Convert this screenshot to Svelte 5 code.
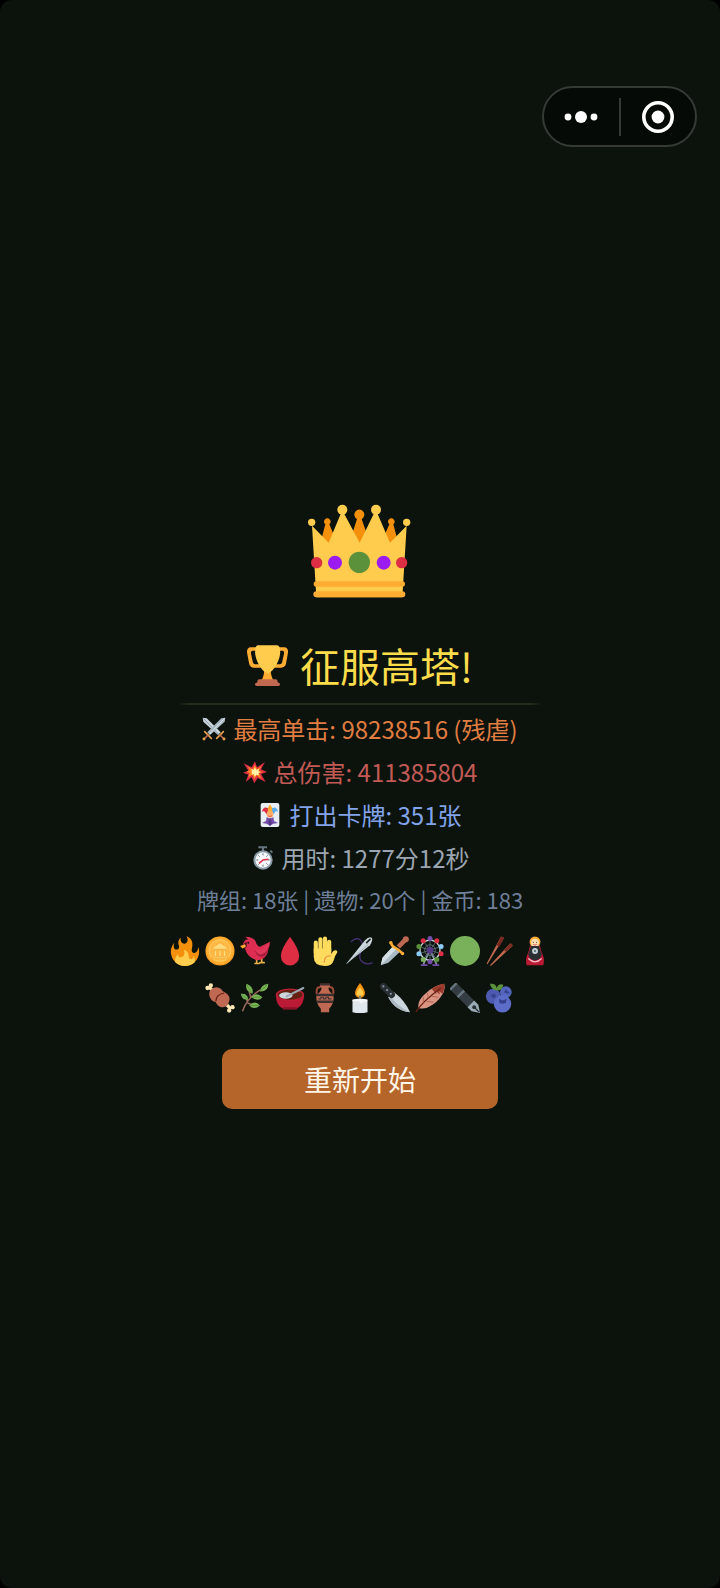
<script lang="ts">
	interface Props {
		maxHit?: number;
		maxHitRank?: string;
		totalDamage?: number;
		cardsPlayed?: number;
		seconds?: number;
		deckSize?: number;
		relicCount?: number;
		gold?: number;
		onrestart?: () => void;
	}

	let {
		maxHit = 98238516,
		maxHitRank = '残虐',
		totalDamage = 411385804,
		cardsPlayed = 351,
		seconds = 76632,
		deckSize = 18,
		relicCount = 20,
		gold = 183,
		onrestart = () => {},
	}: Props = $props();

	const elapsed = $derived(`${Math.floor(seconds / 60)}分${seconds % 60}秒`);

	// Ferris wheel cabins, clockwise from the top
	const CABINS = ['#744eaa', '#dd2e44', '#8ccaf7', '#dd2e44', '#5c913b', '#744eaa', '#78b159', '#8ccaf7', '#5c913b', '#dd2e44'];
	const cabins = CABINS.map((color, i) => {
		const a = (i / CABINS.length) * Math.PI * 2;
		return { color, x: 18 + Math.sin(a) * 14, y: 17 - Math.cos(a) * 14 };
	});
</script>

<div class="screen">
	<header>
		<div class="capsule">
			<button type="button" aria-label="更多">
				<svg width="34" height="14" viewBox="0 0 34 14" fill="#fff">
					<circle cx="4" cy="7" r="3.4" />
					<circle cx="17" cy="7" r="6" />
					<circle cx="30" cy="7" r="3.4" />
				</svg>
			</button>
			<span class="split"></span>
			<button type="button" aria-label="关闭">
				<svg width="34" height="34" viewBox="0 0 34 34">
					<circle cx="17" cy="17" r="14.2" fill="none" stroke="#fff" stroke-width="3.6" />
					<circle cx="17" cy="17" r="6.4" fill="#fff" />
				</svg>
			</button>
		</div>
	</header>

	<main>
		<svg class="crown" viewBox="53 40 312 288" aria-hidden="true">
			<path fill="#f4900c" d="M88 168l17-64a10 10 0 1 1 12 0l26 62zM180 150l20-62a15 15 0 1 1 14 0l22 64-28 18zM270 166l27-62a10 10 0 1 1 12 0l17 64z" />
			<path fill="#ffcc4d" d="M78 323L65 108l50 51 36-86h11l46 86 42-86h12l37 86 50-51-13 215z" />
			<g fill="#ffcc4d">
				<circle cx="64" cy="98" r="11" />
				<circle cx="156" cy="60" r="15" />
				<circle cx="257" cy="60" r="15" />
				<circle cx="349" cy="98" r="11" />
			</g>
			<path fill="#ffac33" d="M78 275h258a8 8 0 0 1 0 16H78a8 8 0 0 1 0-16zM78 305h258a9 9 0 0 1 0 18H78a9 9 0 0 1 0-18z" />
			<circle cx="207" cy="218" r="32" fill="#5c913b" />
			<g fill="#9c1cef">
				<circle cx="134" cy="219" r="21" />
				<circle cx="280" cy="219" r="21" />
			</g>
			<g fill="#dd2e44">
				<circle cx="79" cy="219" r="17" />
				<circle cx="334" cy="219" r="17" />
			</g>
		</svg>

		<h1>
			<svg viewBox="0 0 36 36" aria-hidden="true">
				<path fill="#ffac33" d="M5.123 5h6C12.227 5 13 4.896 13 6V4c0-1.104-.773-2-1.877-2h-8c-2 0-3.583 2.125-3 5 0 0 1.791 9.375 1.917 9.958C2.373 18.5 4.164 20 6.081 20h6.958c1.105 0-.039-1.896-.039-3v-2c0 1.104-.773 2-1.877 2h-4c-1.104 0-1.833-1.042-2-2S3.539 7.667 3.539 7.667C3.206 5.75 4.018 5 5.123 5zm25.812 0h-6C23.831 5 22 4.896 22 6V4c0-1.104 1.831-2 2.935-2h8c2 0 3.584 2.125 3 5 0 0-1.633 9.419-1.771 10-.354 1.5-2.042 3-4 3h-7.146C21.914 20 22 18.104 22 17v-2c0 1.104 1.831 2 2.935 2h4c1.104 0 1.834-1.042 2-2s1.584-7.333 1.584-7.333C32.851 5.75 32.04 5 30.935 5zM20.832 22c0-6.958-2.709 0-2.709 0s-3-6.958-3 0-3.291 10-3.291 10h12.292s-3.292-3.042-3.292-10z" />
				<path fill="#ffcc4d" d="M29.123 6.577c0 6.775-6.77 18.192-11 18.192-4.231 0-11-11.417-11-18.192 0-5.195 1-6.319 3-6.319h15c2.917 0 4 .656 4 6.319z" />
				<path fill="#c1694f" d="M11 30h14q2 0 2 3 2 0 2 1.500 0 1.500-1.500 1.500h-19Q7 36 7 34.500 7 33 9 33q0-3 2-3z" />
			</svg>
			<span>征服高塔!</span>
		</h1>

		<hr />

		<ul class="stats">
			<li class="hit">
				<svg viewBox="0 0 36 36" aria-hidden="true">
					<path d="M1 1l6 1 21 21-4 4L2 7z" fill="#ccd6dd" />
					<path d="M2 2l23 24" stroke="#8899a6" stroke-width="1.500" />
					<path d="M35 1l-6 1L8 23l4 4L34 7z" fill="#aab8c2" />
					<path d="M34 2L11 26" stroke="#e1e8ed" stroke-width="1.500" />
					<path d="M4 22l10 10M32 22L22 32" stroke="#e8a04a" stroke-width="2.500" stroke-linecap="round" />
					<path d="M9 27l-6 6M27 27l6 6" stroke="#bf6952" stroke-width="2.500" />
					<circle cx="3" cy="33" r="2.200" fill="#e8a04a" />
					<circle cx="33" cy="33" r="2.200" fill="#e8a04a" />
				</svg>
				最高单击: {maxHit} ({maxHitRank})
			</li>
			<li class="damage">
				<svg viewBox="0 0 36 36" aria-hidden="true">
					<path fill="#dd2e44" d="M1 5l12 6 5-9 3 9 12-8-6 11 9 4-9 3 7 12-12-6-5 8-4-9-9 7 4-11-8-3 8-3z" />
					<path fill="#ff8a20" d="M6 9l8 5 4-7 3 7 7-5-4 7 6 2-6 2 4 8-8-5-3 6-3-7-6 4 2-7-5-1 5-3z" />
					<path fill="#fff1a8" d="M12 13l4 2 2-4 2 4 4-2-1 4 3 1-3 2 1 3-4-1-2 3-2-4-3 1 1-3-2-1 2-1z" />
				</svg>
				总伤害: {totalDamage}
			</li>
			<li class="cards">
				<svg viewBox="0 0 36 36" aria-hidden="true">
					<rect x="4" width="28" height="36" rx="3" fill="#e9eef2" />
					<path fill="#ffac33" d="M18 2l5 8-1 8h-8l-1-8z" />
					<path fill="#dd2e44" d="M15 8c-5-3-8 0-9 5l3-1 5 6z" />
					<path fill="#55acee" d="M21 8c5-3 8 0 9 5l-3-1-5 6z" />
					<circle cx="18" cy="17" r="5" fill="#ffb066" />
					<path d="M15 19q3 3 6 0" fill="none" stroke="#dd2e44" />
					<path fill="#744eaa" d="M13 21q5 4 10 0l1 6 6 3-7 1-5 3-5-3-7-1 6-3z" />
					<path fill="#553788" d="M18 23l3 7-3 5-3-5z" />
				</svg>
				打出卡牌: {cardsPlayed}张
			</li>
			<li class="time">
				<svg viewBox="0 0 36 36" aria-hidden="true">
					<path d="M11 2h13M18 2v6M29 7l3 3" stroke="#66757f" stroke-width="3" />
					<circle cx="18" cy="21" r="14.500" fill="#8899a6" />
					<circle cx="18" cy="21" r="11.500" fill="#f5f8fa" />
					<path d="M18 11v3M18 28v3M8 21h3M25 21h3M11 14l2 2M25 14l-2 2M11 28l2-2M25 28l-2-2" stroke="#66757f" stroke-width="1.500" />
					<path d="M26 20l-8 1-6 5" fill="none" stroke="#dd2e44" stroke-width="2.200" />
				</svg>
				用时: {elapsed}
			</li>
			<li class="summary">牌组: {deckSize}张 | 遗物: {relicCount}个 | 金币: {gold}</li>
		</ul>

		<div class="relics" role="img" aria-label="遗物">
			<div class="row">
				<!-- fire -->
				<svg viewBox="0 0 36 36">
					<path fill="#f4900c" d="M35 19c0-2.062-.367-4.039-1.04-5.868-.46 5.389-3.333 8.157-6.335 6.868-2.812-1.208-.917-5.917-.777-8.164.236-3.809-.012-8.169-6.931-11.794 2.875 5.5.333 8.917-2.333 9.125-2.958.231-5.667-2.542-4.667-7.042-3.238 2.386-3.332 6.402-2.333 9 1.042 2.708-.042 4.958-2.583 5.208-2.84.28-4.418-3.041-2.963-8.333C2.52 10.965 1 14.805 1 19c0 9.389 7.611 17 17 17s17-7.611 17-17z" />
					<path fill="#ffcc4d" d="M28.394 23.999c.148 3.084-2.561 4.293-4.019 3.709-2.106-.843-1.541-2.291-2.083-5.291s-2.625-5.083-5.708-6c2.25 6.333-1.247 8.667-3.08 9.084-1.872.426-3.753-.001-3.968-4.007C7.352 23.668 6 26.676 6 30c0 .368.023.73.055 1.09C9.125 34.124 13.342 36 18 36s8.875-1.876 11.945-4.91c.032-.36.055-.722.055-1.09 0-2.187-.584-4.236-1.606-6.001z" />
				</svg>
				<!-- coin -->
				<svg viewBox="0 0 36 36">
					<circle cx="18" cy="18" r="17.500" fill="#f49b22" />
					<circle cx="18" cy="17.500" r="16.500" fill="#ffac33" />
					<circle cx="18" cy="17.500" r="13" fill="#ffb944" stroke="#ffd166" />
					<path d="M9 14l9-6 9 6v2H9zM11 17h3v8h-3zM16.500 17h3v8h-3zM22 17h3v8h-3zM9 25h18v2H9z" fill="#ffd97a" stroke="#f4a52c" stroke-width=".7" />
				</svg>
				<!-- bird -->
				<svg viewBox="0 0 36 36">
					<path d="M20 27v5M26 26v5M18 33h5M24 32h5" stroke="#e8b04a" stroke-width="2" stroke-linecap="round" />
					<path fill="#dd2e52" d="M3 11Q5 4 10 4L6 1q10 0 13 6 1 5 5 6l12-6q0 5-2 8 0 7-5 11-4 3-9 3Q9 26 6 15z" />
					<path fill="#a51d3c" d="M18 17q5 4 9 0l7-2q-1 9-8 10-6 0-8-8z" />
					<path fill="#e23659" d="M18 15q5 4 9 0l8-7q-1 12-9 14-6 1-8-7z" />
					<path fill="#5a1526" d="M3 11q2-3 5-4v6l-3 3z" />
					<path fill="#ffac33" d="M0 12l6-2 1 3-4 2z" />
					<circle cx="10" cy="8" r="1.200" fill="#1b1215" />
				</svg>
				<!-- blood -->
				<svg viewBox="0 0 36 36">
					<path fill="#dd2e44" d="M18 1q11 15 11 23a11 11.500 0 0 1-22 0Q7 16 18 1z" />
				</svg>
				<!-- hand -->
				<svg viewBox="0 0 36 36">
					<path d="M7 20V8M12.500 17V4M18 17V3M23 19V7" stroke="#ffdc5d" stroke-width="5" stroke-linecap="round" />
					<path fill="#ffdc5d" d="M4.500 15h21v7q2-5 5-5 3 0 2 3-3 4-4 9-2 7-11 7-13 0-13-11z" />
					<path d="M25 24q-8-1-8 8" fill="none" stroke="#ef9645" stroke-width="1.500" />
				</svg>
				<!-- needle and thread -->
				<svg viewBox="0 0 36 36">
					<path d="M7 7Q16-1 20 7q3 5-1 12-4 9 3 13 5 3 11 0" fill="none" stroke="#483076" stroke-width="1.500" />
					<path fill="#ccd6dd" d="M1 34L24 5q5-5 8-3 2 2-2 9z" />
					<path d="M2 33L28 10" stroke="#99aab5" />
					<path d="M26 8l4-4" stroke="#1b2421" stroke-width="2" stroke-linecap="round" />
				</svg>
				<!-- dagger -->
				<svg viewBox="0 0 36 36">
					<path fill="#a9bac5" d="M1 35l2-9 13-14 8 7-14 13z" />
					<path fill="#d5e0e6" d="M1 35L20 15l-4-3L3 26z" />
					<path d="M22 13l8-8" stroke="#bf6952" stroke-width="5.500" />
					<path d="M13 8q1 4 5 6t9 7" fill="none" stroke="#ffac33" stroke-width="3" stroke-linecap="round" />
					<circle cx="31" cy="4" r="3.600" fill="#bf6952" />
					<circle cx="13" cy="8" r="2" fill="#ffac33" />
					<circle cx="27" cy="21" r="2" fill="#ffac33" />
				</svg>
				<!-- ferris wheel -->
				<svg viewBox="0 0 36 36">
					<path d="M18 17L10 34M18 17l8 17" stroke="#8899a6" stroke-width="2" />
					<circle cx="18" cy="17" r="12" fill="none" stroke="#ccd6dd" stroke-width="1.500" />
					<circle cx="18" cy="17" r="6.500" fill="none" stroke="#66757f" />
					{#each cabins as cabin}
						<path d="M18 17L{cabin.x} {cabin.y}" stroke="#66757f" />
						<circle cx={cabin.x} cy={cabin.y} r="3" fill={cabin.color} />
					{/each}
					<circle cx="18" cy="17" r="4" fill="#553788" />
					<path d="M7 35h8M21 35h8" stroke="#744eaa" stroke-width="2" />
				</svg>
				<!-- green orb -->
				<svg viewBox="0 0 36 36">
					<circle cx="18" cy="18" r="18" fill="#78b159" />
				</svg>
				<!-- chopsticks -->
				<svg viewBox="0 0 36 36">
					<path fill="#c1694f" d="M2 33L19 1q3-1 3 2L3 34zM6 35L30 9q3 0 3 3L7 36z" />
					<path fill="#7a2a20" d="M14 11l5-10q4-1 4 2l-6 10zM23 17l7-8q3 0 3 3l-8 7z" />
				</svg>
				<!-- nesting doll -->
				<svg viewBox="0 0 36 36">
					<path fill="#bb1a34" d="M12 11h12q1 7 3 11 3 6 1 13H8Q6 28 9 22q2-4 3-11z" />
					<circle cx="18" cy="7" r="6.500" fill="#ffac33" />
					<circle cx="18" cy="8" r="4.800" fill="#ffdcad" />
					<path fill="#292f33" d="M13 12h10q1 6 3 9 0 8-8 8t-8-8q2-3 3-9z" />
					<circle cx="18" cy="18" r="3.500" fill="#ccd6dd" />
					<circle cx="18" cy="18" r="1.500" fill="#66757f" />
					<path d="M10 27q8 8 16 0" fill="none" stroke="#f5bdc4" stroke-width="1.500" />
					<path d="M16 7v1M20 7v1" stroke="#292f33" stroke-width="1.200" />
					<path d="M16 10q2 2 4 0" fill="none" stroke="#dd2e44" />
				</svg>
			</div>
			<div class="row">
				<!-- bone -->
				<svg viewBox="0 0 36 36">
					<path d="M5 5l26 26" stroke="#ffe8b6" stroke-width="4" />
					<g fill="#ffe8b6">
						<circle cx="3" cy="6" r="2.600" />
						<circle cx="7" cy="3" r="2.600" />
						<circle cx="29" cy="33" r="2.600" />
						<circle cx="33" cy="29" r="2.600" />
					</g>
					<path fill="#bf6952" d="M5 14q0-6 5-8 5-2 9 1 2 4 6 5 6 4 4 10-2 8-9 7-5-1-7-6-7-2-8-9z" />
					<path d="M13 22q0-8 10-10" fill="none" stroke="#662113" stroke-width="1.500" />
				</svg>
				<!-- herb -->
				<svg viewBox="0 0 36 36">
					<path d="M3 34Q8 18 25 8M9 22L5 14M13 18l-2-8M9 24l9 3M14 17l8 1" fill="none" stroke="#9a6a5c" stroke-width="1.800" />
					<path fill="#77b255" d="M34 1q0 10-10 9 1-8 10-9zM8 1q9 4 7 12Q5 9 8 1zM1 13q8-1 9 7-8 1-9-7zM14 17q5-7 13 0-5 6-13 0zM11 27q7-7 13 0-7 6-13 0z" />
					<path d="M33 2l-9 8M8 2l6 10M2 14l8 6M14 17h11M12 27h11" stroke="#5c913b" />
				</svg>
				<!-- bowl -->
				<svg viewBox="0 0 36 36">
					<path fill="#bb1a34" d="M1 14h34q0 12-9 17H10Q1 27 1 14z" />
					<path fill="#8a152a" d="M10 29h16v3H10z" />
					<ellipse cx="18" cy="14" rx="17" ry="7.500" fill="#bf2038" />
					<ellipse cx="18" cy="14" rx="15" ry="6" fill="#662113" />
					<ellipse cx="13" cy="15" rx="8" ry="4" fill="#ccd6dd" />
					<path d="M14 16L34 6" stroke="#99aab5" stroke-width="2.400" stroke-linecap="round" />
				</svg>
				<!-- amphora -->
				<svg viewBox="0 0 36 36">
					<path d="M13 5Q7 4 8 13M23 5q6-1 5 8" fill="none" stroke="#9c4a37" stroke-width="2.500" />
					<path fill="#bf6952" d="M12 1h12v3l-2 2q1 5 6 8 2 9-5 17v4H13v-4Q6 23 8 14q5-3 6-8l-2-2z" />
					<path fill="#3f3030" d="M8 13h20v3H8zM8 21h20l-1 3H9zM12 1h12v2H12z" />
					<path d="M10 19h3v-2h3v2h3v-2h3v2h4" fill="none" stroke="#3f3030" stroke-width="1.300" />
				</svg>
				<!-- candle -->
				<svg viewBox="0 0 36 36">
					<path fill="#f4900c" d="M18 0q6 8 6 12a6 6 0 0 1-12 0Q12 8 18 0z" />
					<path fill="#ffcc4d" d="M18 5q5 5 4 9-4 4-8 0-1-4 4-9z" />
					<path d="M18 15v7" stroke="#66757f" stroke-width="1.500" />
					<path fill="#e1e8ed" d="M9 20q9-2 18 0v15q-9 2-18 0z" />
					<path fill="#f5f8fa" d="M9 20q9-2 18 0l-1 3-4-1-2 3-3-3H9z" />
				</svg>
				<!-- knife -->
				<svg viewBox="0 0 36 36">
					<path fill="#ccd6dd" d="M10 17l7-6q13 10 19 24-18-2-26-18z" />
					<path fill="#aab8c2" d="M10 17l2-2q7 12 24 20-18-2-26-18z" />
					<path d="M4 4l10 10" stroke="#292f33" stroke-width="8" stroke-linecap="round" />
					<g fill="#8899a6">
						<circle cx="4" cy="4" r="1.300" />
						<circle cx="8.500" cy="8.500" r="1.300" />
						<circle cx="13" cy="13" r="1.300" />
					</g>
				</svg>
				<!-- feather -->
				<svg viewBox="0 0 36 36">
					<path fill="#d99482" d="M35 1q2 8-3 14-5 8-14 13-6 4-14 2-1-9 7-16Q22 3 35 1z" />
					<path fill="#9c3b2c" d="M35 1q1 7-2 12l-4-3 1 4-5-4 1 4-6-7Q28 2 35 1z" />
					<path d="M1 35Q8 23 31 6" fill="none" stroke="#662113" stroke-width="1.500" />
					<path d="M10 25v-8M16 19l-1-7M14 22l8 1M20 16l8 1" stroke="#a8523f" stroke-width=".8" />
				</svg>
				<!-- fountain pen -->
				<svg viewBox="0 0 36 36">
					<path d="M4 4l21 21" stroke="#343d43" stroke-width="11" />
					<path d="M3 3l2 2M12 12l2 2" stroke="#66757f" stroke-width="11" />
					<path fill="#99aab5" d="M21 29l8-8 5 5 2 10-10-2z" />
					<path d="M35 35l-5-5" stroke="#292f33" stroke-width="1.500" />
					<circle cx="29" cy="29" r="2.300" fill="#292f33" />
				</svg>
				<!-- blueberries -->
				<svg viewBox="0 0 36 36">
					<circle cx="10" cy="16" r="9" fill="#4c5bb0" />
					<circle cx="25" cy="11" r="7" fill="#5365bd" />
					<circle cx="21" cy="25" r="10.500" fill="#5c6dc9" />
					<path fill="#36418f" d="M17 19l4 2 5-2-1 5-4 1-4-1zM25 7l2 3 3 1-3 2-4-2zM7 14l5-1 1 4-4 1z" />
					<path fill="#5c913b" d="M6 1q7-1 8 5 2-6 8-4-1 7-8 7-7-1-8-8z" />
				</svg>
			</div>
		</div>

		<button class="restart" type="button" onclick={onrestart}>重新开始</button>
	</main>
</div>

<style>
	:global(body) {
		background: #000;
	}

	.screen {
		display: flex;
		flex-direction: column;
		min-height: 100vh;
		border-radius: 12px;
		background: #0b130c;
		font-family: 'Noto Sans CJK SC', sans-serif;
	}

	svg {
		display: block;
		flex: none;
	}

	header {
		display: flex;
		justify-content: flex-end;
		padding: 86px 23px 0;
	}

	.capsule {
		display: flex;
		align-items: center;
		box-sizing: border-box;
		width: 155px;
		height: 61px;
		border: 2px solid #353a35;
		border-radius: 31px;
		background: #050a06;
	}

	.capsule button {
		display: flex;
		flex: 1;
		align-items: center;
		justify-content: center;
		height: 100%;
		padding: 0;
		border: none;
		background: none;
		cursor: pointer;
	}

	.split {
		width: 2px;
		height: 38px;
		background: #353a35;
	}

	main {
		display: flex;
		flex: 1;
		flex-direction: column;
		align-items: center;
		justify-content: center;
		padding-bottom: 123px;
	}

	.crown {
		width: 104px;
		height: 96px;
	}

	h1 {
		display: flex;
		align-items: center;
		gap: 12px;
		margin: 42px 0 14px;
		color: #fcdc4a;
		font-size: 40px;
		font-weight: 400;
		line-height: 48px;
	}

	h1 svg {
		width: 41px;
		height: 41px;
	}

	hr {
		width: 364px;
		max-width: 100%;
		height: 2px;
		margin: 0 0 2px;
		border: none;
		background: linear-gradient(90deg, transparent, #262c1a 3%, #262c1a 97%, transparent);
	}

	.stats {
		margin: 0;
		padding: 0;
		list-style: none;
		font-size: 24px;
		line-height: 43px;
	}

	.stats li {
		display: flex;
		align-items: center;
		justify-content: center;
		gap: 7px;
	}

	.stats svg {
		width: 24px;
		height: 24px;
	}

	.hit {
		color: #e07d42;
	}

	.damage {
		color: #c25a56;
	}

	.cards {
		color: #83a3ea;
	}

	.time {
		color: #9ca6b2;
	}

	.stats .summary {
		color: #6f7f98;
		font-size: 22px;
		line-height: 40px;
	}

	.relics {
		display: grid;
		gap: 17px;
		margin: 17px 0 36px;
	}

	.row {
		display: flex;
		justify-content: center;
		gap: 5px;
	}

	.row svg {
		width: 30px;
		height: 30px;
	}

	.restart {
		width: 276px;
		height: 60px;
		padding: 0;
		border: none;
		border-radius: 10px;
		background: #b5642a;
		color: #fff6e8;
		font: inherit;
		font-size: 28px;
		line-height: 58px;
		cursor: pointer;
	}
</style>
